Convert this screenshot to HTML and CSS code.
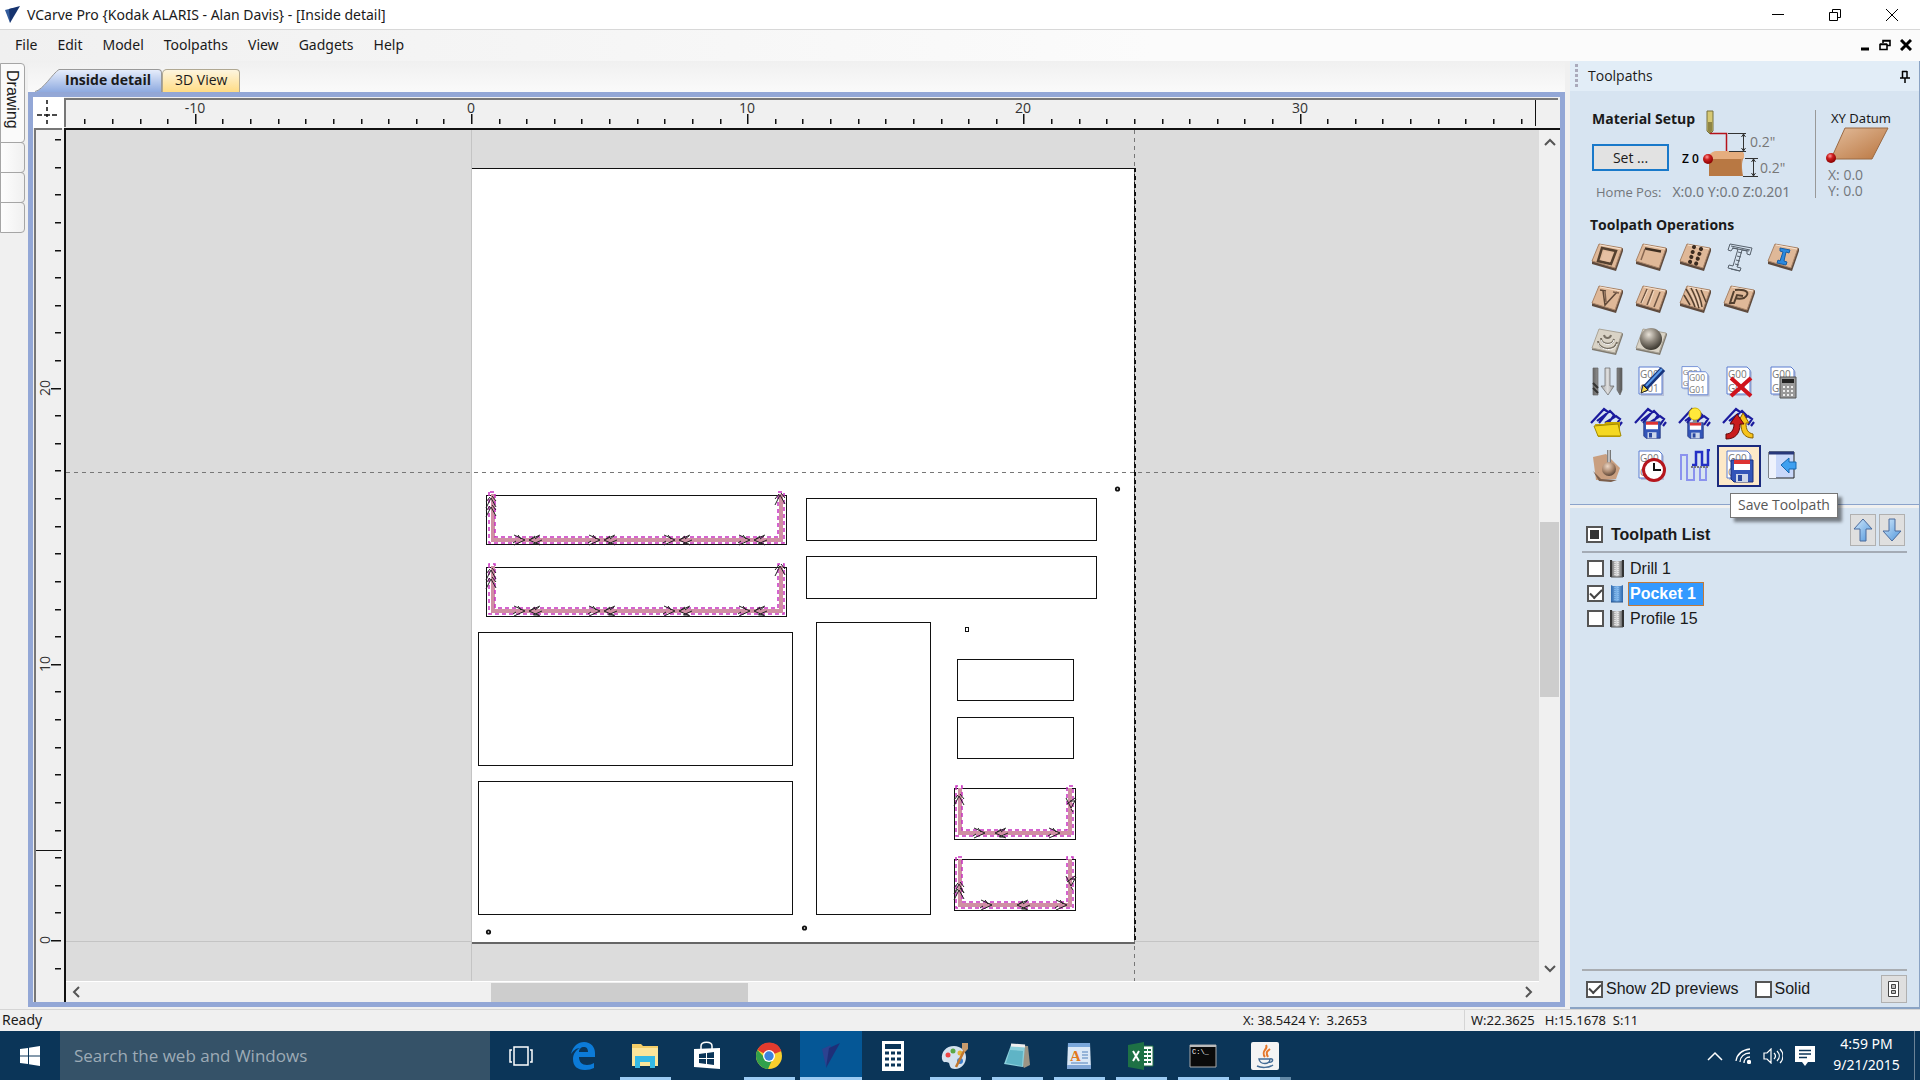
FILE: index.html
```html
<!DOCTYPE html>
<html lang="en">
<head>
<meta charset="utf-8">
<title>VCarve Pro</title>
<link rel="stylesheet" href="styles.css">
</head>
<body>
<svg class="defs" aria-hidden="true">
  <defs>
    <linearGradient id="wood" x1="0" y1="0" x2="1" y2="1"><stop offset="0" stop-color="#e3bd9c"/><stop offset="1" stop-color="#b9753f"/></linearGradient>
    <linearGradient id="steel"><stop offset="0" stop-color="#666"/><stop offset=".5" stop-color="#ddd"/><stop offset="1" stop-color="#555"/></linearGradient>
    <linearGradient id="blueSteel"><stop offset="0" stop-color="#2f68ac"/><stop offset=".5" stop-color="#7db5ec"/><stop offset="1" stop-color="#2f68ac"/></linearGradient>
    <radialGradient id="ball" cx=".4" cy=".3" r=".7"><stop offset="0" stop-color="#e8e2d8"/><stop offset=".5" stop-color="#8d867b"/><stop offset="1" stop-color="#3d3931"/></radialGradient>
    <radialGradient id="woodBall" cx=".4" cy=".3" r=".7"><stop offset="0" stop-color="#ecd6c4"/><stop offset=".6" stop-color="#a8866d"/><stop offset="1" stop-color="#5d483a"/></radialGradient>
    <radialGradient id="redBall" cx=".4" cy=".3" r=".7"><stop offset="0" stop-color="#f99"/><stop offset=".4" stop-color="#cc1f1f"/><stop offset="1" stop-color="#800"/></radialGradient>
    <linearGradient id="arrowBlue" x1="0" y1="0" x2="1" y2="1"><stop offset="0" stop-color="#d3e9fb"/><stop offset="1" stop-color="#4f96dc"/></linearGradient>
    <symbol id="tile" viewBox="0 0 34 34">
      <path d="M2 20v4l24 7 7-20V8z" fill="#5e4a3d"/>
      <path d="M9 4l23 4-7 20-23-7z" fill="#dfb898" stroke="#a98468"/>
      <path d="M10 5l21 4" stroke="#f7e3d0"/>
    </symbol>
    <symbol id="slab" viewBox="0 0 34 34">
      <path d="M2 25v2l24 5 7-20v-2z" fill="#7f7a70"/>
      <path d="M9 6l23 4-7 20-23-5z" fill="#d9d3c6" stroke="#aaa497"/>
    </symbol>
    <symbol id="sheet" viewBox="0 0 34 34">
      <path d="M7 4h20l3 3v24H7z" fill="#b8c0d8"/>
      <path d="M5 2h20l3 3v24H5z" fill="#fff" stroke="#5b7dd0"/>
      <text class="gcode" x="6" y="13">G00</text><text class="gcode" x="6" y="27">G01</text>
    </symbol>
    <symbol id="zigzag" viewBox="0 0 34 34">
      <path d="M1 17L14 3l4 3-9 11M7 15L20 5l4 4-6 9M15 17L26 10l4 3-4 6M29 20l3-4" fill="none" stroke="#1b1b9e" stroke-width="2.200"/>
    </symbol>
    <symbol id="floppy" viewBox="0 0 24 24">
      <path d="M1 1h22v22H4l-3-3z" fill="#3355b8" stroke="#1c2f7a"/>
      <path d="M4 1h16v10H4z" fill="#fff"/><path d="M4 1h16v4H4z" fill="#d33"/>
      <path d="M6 15h12v8H6z" fill="#ccd6ea"/><path d="M8 16h4v6H8z" fill="#2a479e"/>
    </symbol>
    <symbol id="bit" viewBox="0 0 14 20">
      <path d="M1 1v17h12V1l-2 1H3z" fill="url(#steel)"/><path d="M1 1v17M13 1v17" stroke="#333" stroke-width="2"/><path d="M5 3v14M8 3v14" stroke="#fff" stroke-dasharray="1 1"/><path d="M1 18h12" stroke="#555"/>
    </symbol>
    <symbol id="bitBlue" viewBox="0 0 14 20">
      <path d="M1 1v17h12V1l-2 1H3z" fill="url(#blueSteel)"/><path d="M5 3v14M8 3v14" stroke="#9ccaf5" stroke-dasharray="1 1"/><path d="M1 18h12" stroke="#26558e"/>
    </symbol>
    <g id="arrowR"><path d="M-7-5L4 0-7 5M-3-5L0-1M-8 3l3-2" fill="none" stroke="#222"/></g>
    <g id="arrowL"><path d="M7-5L-4 0 7 5M2-4l-4 3M9 0L0 4m6-8l-4 3m4 5l-5 0" fill="none" stroke="#222"/></g>
    <g id="arrowU"><path d="M-5 7L0-3l5 9M-5 1l4-5M5 0L1-5" fill="none" stroke="#222"/></g>
    <g id="arrowD"><path d="M-5-5L0 5l5-9M-4 1l8-6M-1-2l6 0M0 6l2 3" fill="none" stroke="#222"/></g>
  </defs>
</svg>

<header class="titlebar">
  <svg class="app-logo" width="16" height="18" viewBox="0 0 16 18"><path d="M0 4l8-2-3 15z" fill="#335c9c"/><path d="M15 0L4 3l1 14z" fill="#16336e"/></svg>
  <h1 class="title">VCarve Pro {Kodak ALARIS - Alan Davis} - [Inside detail]</h1>
  <div class="window-buttons">
    <button type="button" aria-label="Minimize"><svg width="12" height="12"><path d="M0 5.500h12" stroke="#000"/></svg></button>
    <button type="button" aria-label="Restore"><svg width="12" height="12" fill="none" stroke="#000"><path d="M.5 3.500h8v8h-8zM3.500 3V.5h8v8H9"/></svg></button>
    <button type="button" aria-label="Close"><svg width="12" height="12" stroke="#000"><path d="M0 0l12 12M12 0L0 12"/></svg></button>
  </div>
</header>

<nav class="menubar">
  <button type="button">File</button><button type="button">Edit</button><button type="button">Model</button><button type="button">Toolpaths</button><button type="button">View</button><button type="button">Gadgets</button><button type="button">Help</button>
  <div class="doc-buttons">
    <button type="button" aria-label="Minimize document"><svg width="10" height="12"><path d="M1 10h8" stroke="#000" stroke-width="3"/></svg></button>
    <button type="button" aria-label="Restore document"><svg width="12" height="12" fill="none" stroke="#000"><path d="M1 5.500h7v5H1zM1 5h7M4 4V1.500h7v5H8M4 2h7" stroke-width="1.600"/></svg></button>
    <button type="button" aria-label="Close document"><svg width="12" height="12" stroke="#000" stroke-width="3"><path d="M1 1l10 10M11 1L1 11"/></svg></button>
  </div>
</nav>

<main class="workspace">
  <aside class="rail">
    <button type="button" class="rail-tab rail-main">Drawing</button>
    <button type="button" class="rail-tab" aria-label="Panel 2"></button>
    <button type="button" class="rail-tab" aria-label="Panel 3"></button>
    <button type="button" class="rail-tab" aria-label="Panel 4"></button>
  </aside>

  <section class="document">
    <div class="tabs">
      <button type="button" class="tab tab-active"><svg class="tab-slope" width="30" height="23"><defs><linearGradient id="slope" x2="0" y2="1"><stop offset="0" stop-color="#e6edfb"/><stop offset="1" stop-color="#8eaae0"/></linearGradient></defs><path d="M0 23C8 21 18 4 24 1h6v22z" fill="url(#slope)"/><path d="M0 22.500C8 21 18 4 24 .5h6" fill="none" stroke="#999"/></svg><span>Inside detail</span></button>
      <button type="button" class="tab tab-idle">3D View</button>
    </div>
    <div class="frame">
      <div class="corner"><svg width="22" height="28" stroke="#111"><path d="M11 1v4m0 3v4m0 3v3m0 3v4M1 16h5m2 0h6m2 0h5" stroke-width="1.500"/></svg></div>
      <svg class="ruler-x" id="rulerX"></svg>
      <svg class="ruler-y" id="rulerY"></svg>
      <div class="view">
        <svg class="canvas">
          <g transform="translate(-66 -130)" shape-rendering="crispEdges" fill="none" stroke="#111">
            <path d="M471.500 130V1000M66 941.500H2500" stroke="#c4c4c4"/>
            <path d="M472 168h663v774h-663z" fill="#fff" stroke="none"/>
            <path d="M472 168.500h662V942"/>
            <path d="M472 942.500h663" stroke="#666" stroke-width="2"/>
            <path d="M66 472.500H2500M1134.500 130V1000" stroke="#777" stroke-dasharray="4 4"/>
            <path d="M1134.500 168V942" stroke-width="2" stroke-dasharray="4 4"/>
            <path d="M486.500 495.500h300v49h-300zM486.500 567.500h300v49h-300zM806.500 498.500h290v42h-290zM806.500 556.500h290v42h-290zM478.500 632.500h314v133h-314zM478.500 781.500h314v133h-314zM816.500 622.500h114v292h-114zM957.500 659.500h116v41h-116zM957.500 717.500h116v41h-116zM954.500 788.500h121v51h-121zM954.500 859.500h121v51h-121z"/>
            <path d="M965.500 627.500h3v4h-3z" stroke-width="1.500"/>
          </g>
          <g transform="translate(-66 -130)" fill="none">
            <g stroke="#111" stroke-width="1.800"><circle cx="1117.500" cy="489" r="1.700"/><circle cx="488.500" cy="932" r="1.700"/><circle cx="804.500" cy="928" r="1.700"/></g>
            <g id="cuts"></g>
          </g>
        </svg>
        <div class="vscroll"><i class="chev"><svg width="12" height="8"><path d="M1 7l5-5 5 5"/></svg></i><i class="v-before"></i><i class="v-thumb"></i><i class="v-after"></i><i class="chev"><svg width="12" height="8"><path d="M1 1l5 5 5-5"/></svg></i></div>
        <div class="hscroll"><i class="chev"><svg width="8" height="12"><path d="M7 1L2 6l5 5"/></svg></i><i class="h-before"></i><i class="h-thumb"></i><i class="h-after"></i><i class="chev"><svg width="8" height="12"><path d="M1 1l5 5-5 5"/></svg></i></div>
      </div>
    </div>
  </section>

  <aside class="panel">
    <div class="panel-head"><span class="grip"></span><h2>Toolpaths</h2><button type="button" aria-label="Pin"><svg width="10" height="13" fill="none" stroke="#000"><path d="M2.500 1v7M7 1v7M2 1.500h5M0 8h10M5 8v5" stroke-width="1.500"/></svg></button></div>
    <div class="operations">
      <div class="setup">
        <div class="setup-main">
          <div class="setup-left">
            <h3>Material Setup</h3>
            <button type="button" class="set">Set ...</button>
          </div>
          <svg class="setup-art" width="116" height="72" viewBox="0 0 116 72">
            <path d="M25 1h6v20l-3 3-3-3z" fill="#d6c873" stroke="#77713f"/><path d="M26 12h4v9l-2 3-2-3z" fill="#8f8544"/>
            <path d="M28 23.500h16.500V42" fill="none" stroke="#b5121b" stroke-width="1.500"/>
            <path d="M27 45q3-4 8-4h22q6 0 5 6c-3 6-2 12-1 19H27z" fill="url(#wood)"/><path d="M27 49h32v17H27z" fill="#b87843"/><path d="M27 47q3-6 8-6h22q6 0 5 7l-3 1H27z" fill="#e5ad7e"/>
            <g fill="none" stroke="#333"><path d="M46 23.500h18M47 41.500h17M61.500 24v17M59.500 27l2-3 2 3M59.500 38l2 3 2-3M63 48.500h13M61 66.500h15M71.500 49v17M69.500 52l2-3 2 3M69.500 63l2 3 2-3"/></g>
            <circle cx="26" cy="49" r="5" fill="url(#redBall)"/>
            <text class="z-label" x="0" y="53">Z 0</text><text class="dim" x="68" y="37">0.2"</text><text class="dim" x="78" y="63">0.2"</text>
          </svg>
          <p class="home"><span>Home Pos:</span><span class="home-value">X:0.0 Y:0.0 Z:0.201</span></p>
        </div>
        <div class="datum">
          <h4>XY Datum</h4>
          <svg width="66" height="38" viewBox="0 0 66 38"><path d="M19 1h43L46 32H5z" fill="url(#wood)" stroke="#9a6a45"/><circle cx="5" cy="31" r="5" fill="url(#redBall)"/></svg>
          <p>X: 0.0<br>Y: 0.0</p>
        </div>
      </div>
      <h3 class="ops-title">Toolpath Operations</h3>
      <div class="ops">
        <button type="button" aria-label="Profile"><svg viewBox="0 -1 34 34"><use href="#tile" width="34" height="34"/><path d="M12 8l14 3-5 13-13-3z" fill="none" stroke="#54402f" stroke-width="2.500"/><path d="M14 11l9 2-3 9-9-2z" fill="#e6c0a2"/></svg></button>
        <button type="button" aria-label="Pocket"><svg viewBox="0 -1 34 34"><use href="#tile" width="34" height="34"/><path d="M11 8.500l16 3" stroke="#3f2f22" stroke-width="2.500"/><path d="M11 9L7 20" stroke="#876650" stroke-width="1.500"/></svg></button>
        <button type="button" aria-label="Drill"><svg viewBox="0 -1 34 34"><use href="#tile" width="34" height="34"/><path d="M16 7L12 22M23 9l-5 15" fill="none" stroke="#3b2b20" stroke-width="4" stroke-linecap="round" stroke-dasharray=".1 5"/></svg></button>
        <button type="button" aria-label="Quick engrave"><svg viewBox="0 -1 34 34" fill="none" stroke="#56606b"><path d="M8 4l22 4-2 7-3-1v-3l-5-1-5 17 4 1-1 3-12-3 1-3 4 1 5-17-5-1-2 3-3-1z"/><path d="M9 6l19 4M10 8l17 3M16 12l4 1m-5 3l4 1m-5 3l4 1m-5 3l4 1M9 29l9 2"/></svg></button>
        <button type="button" aria-label="Inlay"><svg viewBox="0 -1 34 34"><use href="#tile" width="34" height="34"/><path d="M14 8l10 2-1 3-3-1-2 9 3 1-1 3-9-2 1-3 2 1 3-9-3-1z" fill="#2b8ae0" stroke="#195ea3"/></svg></button>
        <button type="button" aria-label="V-carve"><svg viewBox="0 -1 34 34"><use href="#tile" width="34" height="34"/><path d="M10 8l6 1M13 9l2 14 12-13" fill="none" stroke="#5e4737" stroke-width="1.500"/><path d="M15 10l1 10M23 10l6 1" stroke="#7d614e" stroke-width="1.500"/></svg></button>
        <button type="button" aria-label="Fluting"><svg viewBox="0 -1 34 34"><use href="#tile" width="34" height="34"/><path d="M13 7L7 21M19 8l-6 15M26 10l-6 15" stroke="#6e5543" stroke-width="1.500"/><path d="M14 8L8 21M20 9l-5 14" stroke="#f1d8c1"/></svg></button>
        <button type="button" aria-label="Texture"><svg viewBox="0 -1 34 34"><use href="#tile" width="34" height="34"/><path d="M8 7c5 8 7 12 9 18M13 6c4 7 6 13 8 20M18 7c3 6 5 11 6 18M23 8l5 12M6 13l6 10" fill="none" stroke="#54402f" stroke-width="1.500"/><path d="M10 6c5 7 6 12 9 19M16 7c3 6 5 12 6 18" fill="none" stroke="#f1d8c1"/></svg></button>
        <button type="button" aria-label="Prism"><svg viewBox="0 -1 34 34"><use href="#tile" width="34" height="34"/><path d="M13 8c12-1 16 3 9 8-3 1-6 1-9 0M12 9L8 21h4l3-8 6 1" fill="none" stroke="#54402f" stroke-width="2"/></svg></button>
        <i></i>
        <button type="button" aria-label="3D rough"><svg viewBox="0 0 34 34"><use href="#slab"/><g fill="none" stroke="#777064" stroke-width="2"><path d="M8 18c0 9 17 11 19 1M11 15c0 7 12 8 13 1M14 12c1 4 6 4 7 0"/></g><path d="M8 20c2 8 17 9 19 1M11 17c2 6 12 6 13 0" fill="none" stroke="#fff"/></svg></button>
        <button type="button" aria-label="3D finish"><svg viewBox="0 0 34 34"><use href="#slab"/><circle cx="17" cy="16" r="11" fill="url(#ball)"/></svg></button>
        <i></i><i></i><i></i>
        <button type="button" aria-label="Tool database"><svg viewBox="0 0 34 34" stroke="#666" stroke-width=".7" fill="url(#steel)"><path d="M3 3h5v27H3zM15 3h5v18h4l-6 9-7-9h4zM27 3h5v22l-2 5-3-5z"/><path d="M3 18l5 5M3 23l5 5" stroke="#333" stroke-width="2"/></svg></button>
        <button type="button" aria-label="Edit toolpath"><svg viewBox="0 0 34 34"><use href="#sheet"/><path d="M29 4L11 23" stroke="#16347c" stroke-width="6"/><path d="M28 4L12 21" stroke="#5c9be8" stroke-width="2"/><path d="M9 20l5 5-7 3z" fill="#f1d64a" stroke="#222"/></svg></button>
        <button type="button" aria-label="Duplicate toolpath"><svg viewBox="0 0 34 34"><use href="#sheet" width="27" height="27" x="0" y="0"/><use href="#sheet" width="29" height="29" x="6" y="5"/></svg></button>
        <button type="button" aria-label="Delete toolpath"><svg viewBox="0 0 34 34"><use href="#sheet"/><path d="M9 13l20 18M29 13L9 31" stroke="#d0121b" stroke-width="4"/></svg></button>
        <button type="button" aria-label="Estimate time"><svg viewBox="0 0 34 34"><use href="#sheet"/><path d="M14 12h16v21H14z" fill="#999" stroke="#555"/><path d="M16 14h12v4H16z" fill="#222"/><path d="M17 22h11M17 26h11M17 30h11" stroke="#eee" stroke-width="2" stroke-dasharray="2 2"/></svg></button>
        <button type="button" aria-label="Open template"><svg viewBox="0 1 34 34"><use href="#zigzag" width="34" height="34"/><path d="M5 18h9l2-2h14v15H8z" fill="#c8a800"/><path d="M4 20l24-2 3 12H8z" fill="#f4d822" stroke="#a38a00"/></svg></button>
        <button type="button" aria-label="Save template"><svg viewBox="0 1 34 34"><use href="#zigzag" width="34" height="34"/><use href="#floppy" x="9" y="15" width="18" height="18"/></svg></button>
        <button type="button" aria-label="Save visible template"><svg viewBox="0 1 34 34"><use href="#zigzag" width="34" height="34"/><use href="#floppy" x="9" y="16" width="17" height="17"/><circle cx="17" cy="8" r="6" fill="#ffe93b" stroke="#d4b400"/><path d="M15 14h4v3h-4z" fill="#888"/></svg></button>
        <button type="button" aria-label="Merge toolpaths"><svg viewBox="0 1 34 34"><use href="#zigzag" width="34" height="34"/><path d="M21 7l6 10h-3c0 7 2 10 7 11v4c-9 0-12-6-12-14h-4z" fill="#f7c41b" stroke="#8a6200"/><path d="M15 8l7 10h-4c0 10-5 15-14 15v-5c5 0 8-4 8-10H8z" fill="#c91c1c" stroke="#5d0a0a"/></svg></button>
        <i></i>
        <button type="button" aria-label="Preview"><svg viewBox="0 0 34 34"><path d="M3 8l13-3 14 14-4 11-20 1z" fill="#c99f80"/><path d="M3 22l8 8 16 1-6 2-12-1z" fill="#7b5e4b"/><path d="M17 1h4v14h-4z" fill="url(#steel)"/><circle cx="19" cy="20" r="7" fill="url(#woodBall)"/></svg></button>
        <button type="button" aria-label="Timing"><svg viewBox="0 0 34 34"><use href="#sheet"/><circle cx="20" cy="21" r="10.500" fill="#fff" stroke="#b5161d" stroke-width="3"/><path d="M20 14v7h7" fill="none" stroke="#111" stroke-width="2"/></svg></button>
        <button type="button" aria-label="Tile toolpaths"><svg viewBox="0 0 34 34" fill="none"><path d="M3 31V6h6v25h7V18M22 18v13h6V18" stroke="#8b93ee" stroke-width="2"/><path d="M14 16h4V3h6v13h6V1h2" stroke="#2430c5" stroke-width="2.500"/><path d="M13 18h17" stroke="#777" stroke-width="2" stroke-dasharray="2 1"/></svg></button>
        <div class="save-cell"><button type="button" class="save" aria-label="Save toolpath" aria-describedby="tip"><svg viewBox="0 0 34 34"><use href="#sheet"/><use href="#floppy" x="8" y="10" width="24" height="24"/></svg></button><span class="tooltip" id="tip" role="tooltip">Save Toolpath</span></div>
        <button type="button" aria-label="Switch layout"><svg viewBox="0 0 34 34"><path d="M3 3h25v26H3z" fill="#c9d8fa" stroke="#222"/><path d="M3 3h7v26H3z" fill="#eef2fc"/><path d="M3 4h25" stroke="#28387b" stroke-width="3"/><path d="M15 16l8-7v4h7v7h-7v4z" fill="#3fa0f0" stroke="#1769b2"/></svg></button>
      </div>
    </div>
    <div class="list-panel">
      <div class="list-head">
        <label class="check"><input type="checkbox" class="mixed"><b>Toolpath List</b></label>
        <div class="order"><button type="button" aria-label="Move up"><svg width="20" height="24"><path d="M10 1l9 10h-6v12H7V11H1z" fill="url(#arrowBlue)" stroke="#4a6a9c"/></svg></button><button type="button" aria-label="Move down"><svg width="20" height="24"><path d="M10 23l9-10h-6V1H7v12H1z" fill="url(#arrowBlue)" stroke="#4a6a9c"/></svg></button></div>
      </div>
      <ul>
        <li><label class="check"><input type="checkbox"><svg width="14" height="20"><use href="#bit"/></svg><span>Drill 1</span></label></li>
        <li><label class="check"><input type="checkbox" checked><svg width="14" height="20"><use href="#bitBlue"/></svg><span class="picked">Pocket 1</span></label></li>
        <li><label class="check"><input type="checkbox"><svg width="14" height="20"><use href="#bit"/></svg><span>Profile 15</span></label></li>
      </ul>
      <div class="preview-row">
        <label class="check"><input type="checkbox" checked><span>Show 2D previews</span></label>
        <label class="check"><input type="checkbox"><span>Solid</span></label>
        <button type="button" aria-label="Undock"><svg width="14" height="18" fill="#fff" stroke="#444"><path d="M1.500 1.500h10v15h-10z"/><path d="M4.500 4.500h4v4h-4zM4.500 10.500h4v3h-4z" fill="#bbb"/></svg></button>
      </div>
    </div>
  </aside>
</main>

<div class="statusbar"><span class="ready">Ready</span><span class="pos">X: 38.5424 Y:&nbsp; 3.2653</span><span class="size">W:22.3625 &nbsp; H:15.1678 &nbsp;S:11</span></div>

<footer class="taskbar">
  <button type="button" class="start" aria-label="Start"><svg width="20" height="20" fill="#fff"><path d="M0 3l8-1v7.500H0zM9 1.800L20 0v9.500H9zM0 10.500h8V18l-8-1zM9 10.500h11V20L9 18.200z"/></svg></button>
  <input class="search" type="text" placeholder="Search the web and Windows" aria-label="Search the web and Windows">
  <div class="apps">
    <button type="button" aria-label="Task view"><svg width="24" height="20" fill="none" stroke="#fff" stroke-width="1.500"><path d="M5 1h14v18H5zM3 4H1v12h2M21 4h2v12h-2"/></svg></button>
    <button type="button" aria-label="Edge"><svg width="24" height="28" viewBox="0 0 24 28"><path d="M0 12C2 4 7 0 13 0c7 0 11 5 11 11v4H8c0 5 3 8 8 8 3 0 5-1 7-2v5c-3 1-5 2-9 2C6 28 2 24 2 17c0-5 3-9 7-11C5 6 2 9 0 12zm8-2h9c0-4-2-5-4-5-3 0-5 2-5 5z" fill="#0c7bd8"/></svg></button>
    <button type="button" class="open" aria-label="File Explorer"><svg width="28" height="26"><path d="M1 1h9l2 2h15v20H1z" fill="#f3cd68"/><path d="M1 5h26v18H1z" fill="#fce59a"/><path d="M4 25V13h20v12h-5v-6H9v6z" fill="#35b9e6"/></svg></button>
    <button type="button" aria-label="Store"><svg width="28" height="30"><path d="M1 8l26-1v21L1 26z" fill="#fff"/><path d="M8 9V5c0-5 11-5 11 0v3" fill="none" stroke="#fff" stroke-width="1.500"/><path d="M6 13l7-1v5H6zm8-1l7-1v6h-7zM6 18h7v5l-7-1zm8 0h7v6l-7-1z" fill="#0b3558"/></svg></button>
    <button type="button" class="open" aria-label="Chrome"><svg width="28" height="28"><circle cx="14" cy="14" r="13" fill="#f9cf2d"/><path d="M14 14L2.500 8A13 13 0 0 1 26.500 9z" fill="#e33b2e"/><path d="M2.500 8A13 13 0 0 0 13 27l5-11-9-1z" fill="#31a04b"/><circle cx="14" cy="14" r="6" fill="#fff"/><circle cx="14" cy="14" r="4.700" fill="#3d83dd"/></svg></button>
    <button type="button" class="open current" aria-label="VCarve Pro"><svg width="22" height="28"><path d="M2 7l9-4-5 22z" fill="#2c4290"/><path d="M20 1L9 6 6 26z" fill="#1f2f78"/></svg></button>
    <button type="button" aria-label="Calculator"><svg width="22" height="30"><path d="M0 0h22v30H0z" fill="#fff"/><path d="M3 3h16v5H3z" fill="#0b3558"/><path d="M3 12h16M3 18h16M3 24h16" stroke="#0b3558" stroke-width="3" stroke-dasharray="4 2"/></svg></button>
    <button type="button" class="open" aria-label="Paint"><svg width="30" height="30"><path d="M14 5C6 5 1 11 2 18c1 5 5 2 7 4 1 3 1 6 6 6 7 0 11-6 11-12S21 5 14 5z" fill="#d4e2ef"/><circle cx="8" cy="14" r="2.500" fill="#e44"/><circle cx="13" cy="10" r="2.500" fill="#5aa845"/><circle cx="20" cy="12" r="2.500" fill="#e4b13c"/><circle cx="20" cy="20" r="3" fill="#3d7fce"/><path d="M25 8L16 26" stroke="#c1772e" stroke-width="2.500"/><path d="M22 2l6 0 0 6-3 3-3-3z" fill="#c79b6d"/></svg></button>
    <button type="button" class="open" aria-label="Notepad"><svg width="28" height="28"><path d="M8 3l17 1 2 19-6 3z" fill="#9c9484"/><path d="M8 3l14 1-2 21-19-3z" fill="#8cd0dc"/><path d="M7 8l13 1-1 15-16-3z" fill="#5fb4c6"/><path d="M8 3l14 1" stroke="#eee" stroke-width="3"/></svg></button>
    <button type="button" class="open" aria-label="WordPad"><svg width="26" height="28"><path d="M2 1h22l1 26H1z" fill="#dbe8f6"/><path d="M2 1h22v4H2z" fill="#7aa7da"/><text x="4" y="19" class="wp">A</text><path d="M16 10h6M16 13h6M16 16h6M5 21h17" stroke="#5080bb"/><path d="M1 23h24v4H1z" fill="#7fa5d5"/></svg></button>
    <button type="button" class="open" aria-label="Excel"><svg width="28" height="28"><path d="M13 4h13v20H13z" fill="#fff" stroke="#1e7145"/><path d="M17 8h8M17 12h8M17 16h8M17 20h8" stroke="#1e7145" stroke-width="2" stroke-dasharray="3 1"/><path d="M1 3l16-3v28L1 25z" fill="#1e7145"/><path d="M6 9l6 10M12 9L6 19" stroke="#fff" stroke-width="2"/></svg></button>
    <button type="button" class="open" aria-label="Command Prompt"><svg width="28" height="24"><path d="M1 1h26v22H1z" fill="#0a0a0a" stroke="#aaa"/><path d="M1 2h26" stroke="#bbb" stroke-width="2"/><text x="3" y="10" class="cmd">C:\_</text></svg></button>
    <button type="button" class="open stacked" aria-label="Java"><svg width="30" height="30"><rect x="1" y="1" width="28" height="28" rx="2" fill="#f4f4f4"/><path d="M16 4c3 4-6 6-1 12M20 8c-4 3-4 4-2 8" fill="none" stroke="#e5772b" stroke-width="2"/><path d="M9 18h11c0 6-10 6-11 0zM20 18c4-1 3 4-1 3M7 25c4 2 12 2 16-1" fill="none" stroke="#446c96" stroke-width="1.500"/></svg></button>
  </div>
  <div class="tray">
    <svg width="16" height="10" fill="none" stroke="#fff" stroke-width="1.500"><path d="M1 9l7-7 7 7"/></svg>
    <svg width="16" height="16" fill="none" stroke="#fff" stroke-width="1.300"><path d="M1 13C2 6 7 2 15 1M5 14c0-5 4-9 10-9M9 15c0-3 2-6 6-6"/><circle cx="14" cy="14" r="1.500" fill="#fff"/></svg>
    <svg width="20" height="16" fill="none" stroke="#fff" stroke-width="1.200"><path d="M1 5h3l4-4v14l-4-4H1zM11 5c2 2 2 4 0 6M14 3c3 3 3 7 0 10M17 1c4 4 4 10 0 14"/></svg>
    <svg width="20" height="22"><path d="M0 1h20v16h-7l-3 4-3-4H0z" fill="#fff"/><path d="M4 5.500h12M4 9h12M4 12.500h8" stroke="#0b3558" stroke-width="1.500"/></svg>
    <time class="clock">4:59 PM<br>9/21/2015</time>
  </div>
</footer>
<script src="rulers.js"></script>
</body>
</html>
```
FILE: styles.css
```css
* { box-sizing: border-box; }
html, body { margin: 0; height: 100%; }
body { display: grid; grid-template-rows: 30px 31px minmax(0, 1fr) 22px 49px; grid-template-columns: minmax(0, 1fr); background: #f0f0f0; color: #1a1a1a; font: 14px/20px "Open Sans", "Noto Sans", sans-serif; overflow: hidden; }
button { margin: 0; padding: 0; border: 0; background: none; color: inherit; font: inherit; }
h1, h2, h3, h4, p, ul { margin: 0; padding: 0; font-size: 14px; list-style: none; }
svg { display: block; flex: none; }
.defs { position: absolute; width: 0; height: 0; }

.titlebar, .menubar, .statusbar { font-family: "Noto Sans", sans-serif; }
.titlebar { display: flex; align-items: center; padding-left: 5px; background: #fff; border-bottom: 1px solid #d8d8d8; }
.title { margin-left: 6px; font-weight: 400; white-space: nowrap; }
.window-buttons { display: flex; margin-left: auto; }
.window-buttons button { display: grid; place-items: center; width: 57px; height: 28px; }

.menubar { display: flex; align-items: center; padding: 0 0 2px 5px; background: linear-gradient(90deg, #f0f0f0, #fbfbfb 60%); }
.menubar > button { padding: 0 10px; }
.doc-buttons { display: flex; gap: 9px; margin-left: auto; padding-right: 8px; }

.workspace { display: grid; grid-template-columns: 28px minmax(0, 1fr) 350px; }
.rail { padding-top: 2px; }
.rail-tab { display: block; width: 25px; height: 31px; margin-bottom: -1px; border: 1px solid #a5a5a5; border-radius: 0 4px 4px 0; background: linear-gradient(90deg, #fdfdfd, #f0f0f0); }
.rail-main { height: 80px; padding: 6px 2px 0 0; writing-mode: vertical-rl; text-align: left; font: 16px/20px "Liberation Sans", sans-serif; background: #fafafa; }

.document { display: grid; grid-template-rows: 31px minmax(0, 1fr); padding: 0 5px 2px 0; }
.tabs { display: flex; align-items: flex-end; padding-left: 7px; background: linear-gradient(#f0f0f0, #fafafa); }
.tab { display: flex; align-items: center; height: 23px; white-space: nowrap; }
.tab-active { font-weight: 700; }
.tab-active span { height: 23px; padding-right: 10px; border: 1px solid #999; border-width: 1px 1px 0 0; border-radius: 0 4px 0 0; background: linear-gradient(#e6edfb, #8eaae0); }
.tab-idle { padding: 0 12px 2px; border: 1px solid #b0a892; border-bottom: 0; border-radius: 5px 4px 0 0; background: linear-gradient(#fdf5df, #ffdc85); }
.frame { display: grid; grid-template-columns: 31px minmax(0, 1fr); grid-template-rows: 31px minmax(0, 1fr); border: 5px solid #93a7d6; background: #f0f0f0; }
.corner { display: grid; place-items: center start; padding-left: 3px; background: #fff; }
.ruler-x { width: calc(100% - 2px); height: 29px; margin-top: 1px; border: solid #777; border-width: 2px 0 0 2px; }
.ruler-y { width: 28px; height: 100%; margin-left: 1px; border: solid #777; border-width: 2px 0 0 2px; }
.ruler-x text, .ruler-y text { font-size: 14px; fill: #333; text-anchor: middle; }
.view { display: grid; grid-template-columns: minmax(0, 1fr) 21px; grid-template-rows: minmax(0, 1fr) 21px; border: solid #111; border-width: 2px 0 0 2px; }
.canvas { width: 100%; height: 100%; background: #dcdcdc; }
.vscroll, .hscroll { display: flex; background: #f0f0f0; }
.vscroll { flex-direction: column; }
.hscroll { border-top: 1px solid #fff; }
.chev { display: grid; place-items: center; flex: 0 0 20px; }
.vscroll .chev { flex-basis: 24px; }
.chev path { fill: none; stroke: #555; stroke-width: 2; }
.v-before { flex: 368; } .v-thumb { flex: 175; margin: 0 1px; background: #cdcdcd; } .v-after { flex: 260; }
.h-before { flex: 405; } .h-thumb { flex: 257; margin-top: 1px; background: #cdcdcd; } .h-after { flex: 770; }

.panel { display: grid; grid-template-rows: 30px 414px minmax(0, 1fr); padding-right: 1px; padding-bottom: 2px; background: #8aa3c4; }
.panel-head { display: flex; align-items: center; padding: 0 9px 0 5px; background: #e2edf7; }
.panel-head h2 { margin: 0 auto 0 10px; font-weight: 400; }
.grip { width: 3px; height: 24px; background: repeating-linear-gradient(#aab 0 3px, transparent 3px 5px); }
.operations { background: #d7e4f1; border-bottom: 1px solid #8ba3cb; }
.setup { display: flex; height: 119px; padding: 19px 0 0 22px; }
.setup-main { display: grid; grid-template-columns: 90px 116px; grid-template-rows: 72px 20px; width: 224px; border-right: 1px solid #999; height: 88px; }
.setup-left { white-space: nowrap; }
.setup-left h3 { line-height: 18px; }
.set { width: 77px; height: 27px; margin-top: 16px; border: 2px solid #1979ca; background: #e2e2e2; text-align: center; line-height: 23px; }
.z-label { font-weight: 600; font-size: 12px; }
.dim { font-size: 14px; fill: #777; }
.home { grid-column: 1 / 3; display: flex; gap: 11px; padding-left: 4px; color: #73777c; white-space: nowrap; font-size: 13px; line-height: 20px; }
.home-value { font: 14px/20px "Noto Sans", sans-serif; }
.datum { padding-left: 10px; }
.datum h4 { padding-left: 5px; font-weight: 400; font: 13px/17px "Noto Sans", sans-serif; }
.datum p { padding: 2px 0 0 2px; font-size: 14px; line-height: 16px; color: #73777c; }
.ops-title { height: 25px; padding-left: 20px; line-height: 30px; }
.ops { display: grid; grid-template-columns: repeat(5, 44px); grid-auto-rows: 42px; padding-left: 15px; }
.ops button { display: grid; place-items: center; width: 44px; height: 42px; }
.ops svg { width: 34px; height: 34px; }
.gcode { font-size: 10px; fill: #777; }
.save-cell { position: relative; }
.ops .save { border: 2px solid #1b2a7d; background: #fde9c8; }
.tooltip { position: absolute; left: 13px; top: 48px; padding: 0 7px 1px; border: 1px solid #767676; background: #fff; color: #575757; white-space: nowrap; line-height: 22px; box-shadow: 4px 4px 3px rgba(0, 0, 0, .45); z-index: 2; }

.list-panel { display: flex; flex-direction: column; margin-top: 3px; padding: 6px 12px 0; background: #d7e4f1; box-shadow: 0 -3px #f0f0f0; font: 16px/22px "Liberation Sans", Arial, sans-serif; }
.list-head { display: flex; justify-content: space-between; height: 39px; padding-left: 4px; border-bottom: 2px solid #a4abb5; }
.list-head .check { gap: 8px; padding-top: 4px; }
.order { display: flex; gap: 3px; padding-right: 2px; }
.order button { display: grid; place-items: center; width: 26px; height: 32px; border: 1px solid #b0b0b0; background: #dfdfdf; }
.check { display: flex; align-items: center; }
.check input { appearance: none; display: grid; place-items: center; width: 17px; height: 17px; margin: 0; border: 2px solid #555; background: #fff; }
.check input:checked::after { content: ""; width: 10px; height: 5px; margin-top: -3px; border: solid #444; border-width: 0 0 2px 2px; rotate: -45deg; }
.check .mixed::after { content: ""; width: 9px; height: 9px; background: #333; }
.list-panel ul { flex: 1; padding: 3px 0 0 5px; font-size: 16px; }
.list-panel li { height: 25px; display: flex; }
.list-panel li svg { margin: 0 4px 0 6px; }
.list-panel li span { padding: 0 4px 0 1px; border: 1px solid transparent; }
.list-panel li .picked { padding-right: 7px; border-color: #c17a3a; background: #3399ff; color: #fff; font-weight: 700; }
.preview-row { display: flex; align-items: center; gap: 16px; height: 38px; padding-left: 4px; border-top: 2px solid #a9adb2; }
.preview-row .check { gap: 3px; }
.preview-row button { display: grid; place-items: center; width: 26px; height: 28px; margin-left: auto; border: 1px solid #b0b0b0; background: #dfdfdf; }

.statusbar { display: flex; align-items: center; padding: 0 0 2px 2px; border-top: 1px solid #d5d5d5; background: #f0f0f0; white-space: nowrap; font-size: 13px; }
.ready { font-size: 14px; }
.pos { margin-left: auto; width: 221px; }
.size { width: 456px; padding-left: 6px; border-left: 1px solid #d5d5d5; }

.taskbar { display: flex; background: #0b3558; color: #fff; }
.start { display: grid; place-items: center; width: 60px; }
.search { flex: 0 1 430px; min-width: 0; border: 0; padding: 0 14px; border-radius: 0; background: #355268; color: #fff; font: 17px/24px "Open Sans", sans-serif; }
.search::placeholder { color: #9dabb6; opacity: 1; }
.apps { display: flex; }
.apps button { display: grid; place-items: center; width: 62px; }
.open { background: linear-gradient(#9ccbf3, #9ccbf3) center bottom / 51px 3px no-repeat; }
.apps .current { background: linear-gradient(#9ccbf3, #9ccbf3) center bottom / 62px 3px no-repeat, #055796; }
.apps .stacked { background: linear-gradient(90deg, #9ccbf3 40px, #6288a5 40px) center bottom / 51px 3px no-repeat; }
.wp { font: 700 15px "Liberation Serif", serif; fill: #e27a20; }
.cmd { font: 7px "Liberation Mono", monospace; fill: #fff; }
.tray { display: flex; align-items: center; gap: 12px; margin-left: auto; padding-right: 5px; }
.clock { width: 88px; height: 49px; padding: 2px 8px 0 0; border-right: 1px solid #6b8397; text-align: center; font: 14px/21px "Noto Sans", sans-serif; white-space: nowrap; }
```
FILE: rulers.js
```js
const NS = "http://www.w3.org/2000/svg";
const STEP = 27.62;

function add(parent, name, attrs, text) {
  const el = document.createElementNS(NS, name);
  for (const key in attrs) el.setAttribute(key, attrs[key]);
  if (text !== undefined) el.textContent = text;
  parent.appendChild(el);
  return el;
}

// Horizontal ruler: the job origin lies 405px from its left edge.
const rx = document.getElementById("rulerX");
for (let i = -14; i < 41; i++) {
  const x = Math.round(405 + i * STEP);
  if (x > 1460) break;
  const major = i % 10 === 0;
  add(rx, "rect", { x: x, y: major ? 14 : 19, width: 1.5, height: major ? 10 : 5, fill: "#111" });
  if (major) add(rx, "text", { x: x, y: 13 }, i);
}
add(rx, "rect", { x: 1469, y: 0, width: 1, height: 26, fill: "#111" });

// Vertical ruler: values grow upwards from the job origin.
const ry = document.getElementById("rulerY");
for (let i = -1; i < 30; i++) {
  const y = Math.round(810 - i * STEP);
  const major = i % 10 === 0;
  add(ry, "rect", { x: major ? 15 : 19, y: y, width: major ? 10 : 6, height: 1.5, fill: "#111" });
  if (major) add(ry, "text", { x: 0, y: 0, transform: `translate(14 ${y}) rotate(-90)` }, i);
}
add(ry, "rect", { x: 0, y: 720, width: 26, height: 1, fill: "#111" });

// Pocket toolpaths: a U-shaped cut with direction marks.
const cuts = document.getElementById("cuts");
const pockets = [
  { l: 492, r: 781, t: 494, b: 540, marks: [["R", 521], ["L", 533], ["R", 596], ["L", 608], ["R", 671], ["L", 683], ["R", 746], ["L", 758]], up: [[491, 501], [491, 510], [780, 498]], down: [] },
  { l: 492, r: 781, t: 566, b: 611, marks: [["R", 521], ["L", 533], ["R", 596], ["L", 608], ["R", 671], ["L", 683], ["R", 746], ["L", 758]], up: [[491, 573], [491, 582], [780, 569]], down: [] },
  { l: 959, r: 1070, t: 788, b: 833, marks: [["R", 981], ["L", 999], ["R", 1056]], up: [[959, 799]], down: [[1071, 803]] },
  { l: 959, r: 1070, t: 859, b: 905, marks: [["R", 988], ["L", 1021], ["R", 1063]], up: [[959, 887], [959, 893]], down: [[1071, 881]] }
];
for (const p of pockets) {
  add(cuts, "path", { d: `M${p.l + 1} ${p.t}V${p.b}H${p.r}V${p.t}`, stroke: "#cf8fa3", "stroke-width": 4 });
  const w = 3;
  add(cuts, "path", {
    d: `M${p.l - w} ${p.t - 2}V${p.b + w}H${p.r + w}V${p.t - 2}H${p.r - w}V${p.b - w}H${p.l + w}V${p.t - 2}z`,
    stroke: "#c832c0", "stroke-width": 1.5, "stroke-dasharray": "4 3"
  });
  for (const [dir, x] of p.marks) add(cuts, "use", { href: "#arrow" + dir, x: x, y: p.b });
  for (const [x, y] of p.up) add(cuts, "use", { href: "#arrowU", x: x, y: y });
  for (const [x, y] of p.down) add(cuts, "use", { href: "#arrowD", x: x, y: y });
}
```
